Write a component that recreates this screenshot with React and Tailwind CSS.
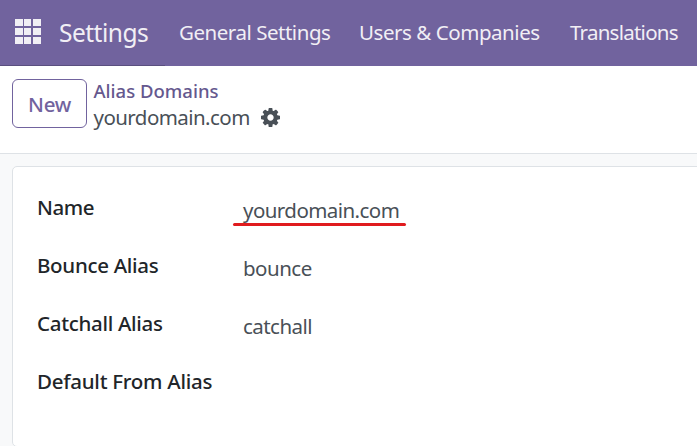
const fields = [
  { label: "Name", value: "yourdomain.com", marked: true, labelTracking: "tracking-[-0.4px]", tracking: "tracking-[-0.56px]" },
  { label: "Bounce Alias", value: "bounce", labelTracking: "tracking-[-0.3px]", tracking: "tracking-[-0.5px]" },
  { label: "Catchall Alias", value: "catchall", labelTracking: "tracking-[-0.3px]", tracking: "tracking-[-0.55px]" },
  { label: "Default From Alias", value: "", labelTracking: "tracking-[-0.26px]", tracking: "" },
];

function AppsIcon() {
  return (
    <div className="mb-[3px] grid w-[26px] grid-cols-[8px_7px_7px] gap-x-[1px] gap-y-[2px]">
      {Array.from({ length: 9 }, (_, i) => (
        <span key={i} className="h-[7px] w-[7px] justify-self-start bg-[#f1eff5] nth-[3n]:w-[8px] nth-[3n]:translate-x-px nth-[3n+1]:w-[8px]" />
      ))}
    </div>
  );
}

function CogIcon() {
  return (
    <svg className="h-[19px] w-[19px]" viewBox="0 128 1536 1536" fill="currentColor">
      <path d="M1024 896q0-106-75-181t-181-75-181 75-75 181 75 181 181 75 181-75 75-181zm512-109v222q0 12-8 23t-20 13l-185 28q-19 54-39 91 35 50 107 138 10 12 10 25t-9 23q-27 37-99 108t-94 71q-12 0-26-9l-138-108q-44 23-91 38-16 136-29 186-7 28-36 28h-222q-14 0-24.5-8.5t-11.5-21.5l-28-184q-49-16-90-37l-141 107q-10 9-25 9-14 0-25-11-126-114-165-168-7-10-7-23 0-12 8-23 15-21 51-66.5t54-70.5q-27-50-41-99l-183-27q-13-2-21-12.5t-8-23.5v-222q0-12 8-23t19-13l186-28q14-46 39-92-40-57-107-138-10-12-10-24 0-10 9-23 26-36 98.5-107.5t94.5-71.5q13 0 26 10l138 107q44-23 91-38 16-136 29-186 7-28 36-28h222q14 0 24.5 8.5t11.5 21.5l28 184q49 16 90 37l142-107q9-9 24-9 13 0 25 10 129 119 165 170 7 8 7 22 0 12-8 23-15 21-51 66.5t-54 70.5q26 50 41 98l183 28q13 2 21 12.5t8 23.5z" />
    </svg>
  );
}

function Navbar() {
  return (
    <header className="relative flex h-[66px] shrink-0 items-center whitespace-nowrap bg-[#71639e] pl-[15px] text-[#f1eff5]">
      <AppsIcon />
      <span className="ml-[18px] w-[120px] text-[24.5px] leading-[34px] tracking-[-0.5px]">Settings</span>
      <nav className="mb-[2px] flex text-[20.5px] leading-[30px]">
        <a className="w-[180px] tracking-[-0.47px]">General Settings</a>
        <a className="w-[211px] tracking-[-0.45px]">Users &amp; Companies</a>
        <a className="tracking-[-0.75px]">Translations</a>
      </nav>
      <i className="absolute bottom-0 left-0 h-px w-[165px] bg-[#5a4f7f]" />
    </header>
  );
}

function ControlPanel() {
  return (
    <div className="flex h-[88px] shrink-0 items-start whitespace-nowrap border-b border-[#dee2e6] bg-white pl-3 pt-[13px]">
      <button className="flex h-[49px] w-[75px] items-center justify-center rounded-[6px] border border-[#71639e] pt-[2px] text-[20.5px] font-medium tracking-[-0.3px] text-[#71639e]">
        New
      </button>
      <div className="ml-[6.5px] -mt-px">
        <div className="h-[26px] text-[18.5px] font-medium leading-[26px] text-[#65588e]">Alias Domains</div>
        <div className="flex h-[26px] items-center text-[#495057]">
          <span className="w-[167.5px] text-[20.5px] leading-[26px] tracking-[-0.56px]">yourdomain.com</span>
          <CogIcon />
        </div>
      </div>
    </div>
  );
}

export default function App() {
  return (
    <div className="flex h-[446px] w-[697px] flex-col overflow-hidden bg-[#f8f9fa] font-['Noto_Sans',sans-serif]">
      <Navbar />
      <ControlPanel />
      <main className="pl-3 pt-3">
        <section className="h-[281px] w-[720px] rounded-[5px] border border-[#dee2e6] bg-white pl-6 pt-[25px]">
          {fields.map((f) => (
            <div key={f.label} className="flex h-[58px] items-start whitespace-nowrap text-[20.5px] leading-[30px]">
              <span className={`w-[206px] font-medium text-[#212529] ${f.labelTracking}`}>{f.label}</span>
              <span className={`relative mt-[3px] text-[#495057] ${f.tracking}`}>
                {f.value}
                {f.marked && <i className="absolute -left-[10px] top-[28px] h-[3px] w-[173px] rounded-full bg-[#e01b1e]" />}
              </span>
            </div>
          ))}
        </section>
      </main>
    </div>
  );
}
